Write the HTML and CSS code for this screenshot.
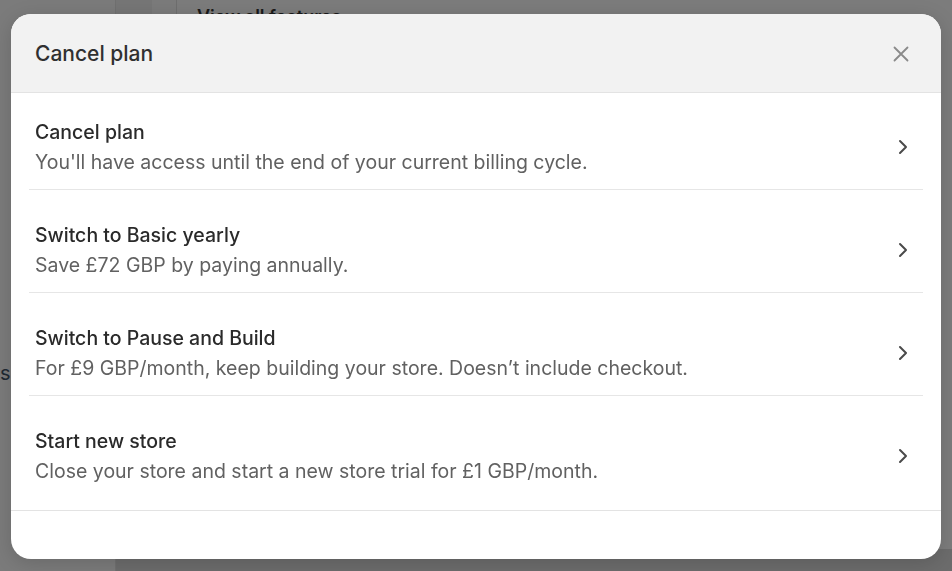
FILE: index.html
```html
<!DOCTYPE html>
<html lang="en">
<head>
<meta charset="utf-8">
<title>Cancel plan</title>
<link rel="stylesheet" href="styles.css">
</head>
<body>
<div class="page">
  <aside class="side">
    <span class="side-s">s</span>
  </aside>
  <div class="strip"></div>
  <div class="gutter"></div>
  <main class="main">
    <p class="main-link">View all features</p>
    <div class="main-bottom"></div>
  </main>
</div>

<div class="modal" role="dialog" aria-label="Cancel plan">
  <header class="modal-head">
    <h2 class="modal-title">Cancel plan</h2>
    <button class="close" aria-label="Close">
      <svg width="16" height="16" viewBox="0 0 16 16"><path d="M1.5 1.5 L14.5 14.5 M14.5 1.5 L1.5 14.5" stroke="#8a8a8a" stroke-width="1.8" stroke-linecap="round" fill="none"/></svg>
    </button>
  </header>
  <div class="options">
    <a class="option">
      <div class="opt-text">
        <div class="opt-title">Cancel plan</div>
        <div class="opt-sub">You'll have access until the end of your current billing cycle.</div>
      </div>
      <svg class="chev" width="10" height="16" viewBox="0 0 10 16"><path d="M2 2 L8 8 L2 14" stroke="#4a4a4a" stroke-width="2" fill="none" stroke-linecap="round" stroke-linejoin="round"/></svg>
    </a>
    <div class="sep"></div>
    <a class="option">
      <div class="opt-text">
        <div class="opt-title">Switch to Basic yearly</div>
        <div class="opt-sub">Save £72 GBP by paying annually.</div>
      </div>
      <svg class="chev" width="10" height="16" viewBox="0 0 10 16"><path d="M2 2 L8 8 L2 14" stroke="#4a4a4a" stroke-width="2" fill="none" stroke-linecap="round" stroke-linejoin="round"/></svg>
    </a>
    <div class="sep"></div>
    <a class="option">
      <div class="opt-text">
        <div class="opt-title">Switch to Pause and Build</div>
        <div class="opt-sub">For £9 GBP/month, keep building your store. Doesn’t include checkout.</div>
      </div>
      <svg class="chev" width="10" height="16" viewBox="0 0 10 16"><path d="M2 2 L8 8 L2 14" stroke="#4a4a4a" stroke-width="2" fill="none" stroke-linecap="round" stroke-linejoin="round"/></svg>
    </a>
    <div class="sep"></div>
    <a class="option">
      <div class="opt-text">
        <div class="opt-title">Start new store</div>
        <div class="opt-sub">Close your store and start a new store trial for £1 GBP/month.</div>
      </div>
      <svg class="chev" width="10" height="16" viewBox="0 0 10 16"><path d="M2 2 L8 8 L2 14" stroke="#4a4a4a" stroke-width="2" fill="none" stroke-linecap="round" stroke-linejoin="round"/></svg>
    </a>
  </div>
  <footer class="modal-foot"></footer>
</div>
</body>
</html>
```

FILE: styles.css
```css
* { box-sizing: border-box; }

html, body {
  margin: 0;
  height: 100%;
}

body {
  font-family: Inter, "Noto Sans", sans-serif;
  background: #7b7b7b;
  overflow: hidden;
}

.page {
  display: grid;
  grid-template-columns: 116px 36px 25px 1fr;
  height: 571px;
}

.side {
  background: #7b7b7b;
  border-right: 1px solid #707070;
  display: flex;
  align-items: flex-start;
  padding-top: 361px;
}

.side-s {
  font-size: 20px;
  line-height: 24px;
  color: #1f2a33;
  margin-left: 0;
}

.strip {
  background: #767676;
}

.gutter {
  background: #7b7b7b;
  border-right: 1px solid #6e6e6e;
}

.main {
  background: #7c7c7c;
  display: flex;
  flex-direction: column;
  justify-content: space-between;
}

.main-link {
  margin: 6px 0 0 20px;
  font-size: 18px;
  font-weight: 600;
  color: #1a1a1a;
}

.main-bottom {
  height: 22px;
  background: #6c6c6c;
  margin-left: -61px;
}

.modal {
  position: fixed;
  left: 11px;
  top: 14px;
  width: 930px;
  height: 545px;
  background: #ffffff;
  border-radius: 20px;
  overflow: hidden;
  display: flex;
  flex-direction: column;
  box-shadow: 0 4px 20px rgba(0, 0, 0, 0.15);
}

.modal-head {
  height: 79px;
  flex: none;
  background: #f2f2f2;
  border-bottom: 1px solid #e3e3e3;
  display: flex;
  align-items: center;
  justify-content: space-between;
  padding: 0 24px;
}

.modal-title {
  margin: 0;
  font-size: 21px;
  font-weight: 550;
  color: #303030;
}

.close {
  width: 32px;
  height: 32px;
  border: 0;
  background: transparent;
  padding: 0;
  display: flex;
  align-items: center;
  justify-content: center;
  margin-top: 1px;
}

.options {
  padding: 12px 18px;
  flex: none;
}

.option {
  display: flex;
  align-items: center;
  justify-content: space-between;
  padding: 12px 6px;
  color: inherit;
  text-decoration: none;
}

.opt-title {
  font-size: 19.5px;
  line-height: 30px;
  font-weight: 550;
  color: #2a2a2a;
}

.opt-sub {
  font-size: 19.5px;
  line-height: 30px;
  color: #616161;
}

.chev {
  margin-right: 9px;
  flex: none;
}

.sep {
  height: 1px;
  background: #e6e6e6;
  margin-bottom: 18px;
}

.modal-foot {
  flex: 1;
  border-top: 1px solid #e3e3e3;
}
```
